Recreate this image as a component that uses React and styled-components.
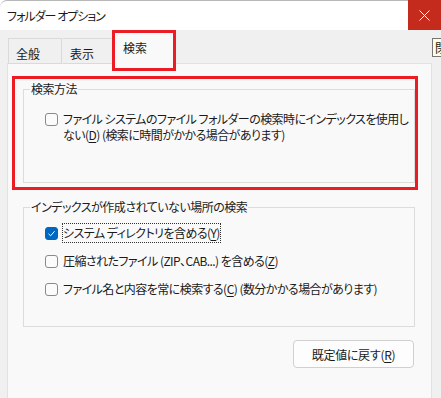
import React from 'react';
import styled, { createGlobalStyle } from 'styled-components';

const Global = createGlobalStyle`
  html, body { margin: 0; padding: 0; background: #f0f0f0; }
  body {
    font-family: "Noto Sans CJK JP", "Noto Sans", sans-serif;
    font-size: 12px;
    color: #1a1a1a;
  }
`;

const Window = styled.div`
  position: relative;
  width: 441px;
  height: 398px;
  overflow: hidden;
  background: #f0f0f0;
  display: flex;
  flex-direction: column;
  font-feature-settings: "palt";
`;

const TitleBar = styled.div`
  flex: none;
  height: 30px;
  display: flex;
  background: #fff;
`;

const Title = styled.div`
  flex: 1;
  display: flex;
  align-items: center;
  padding-left: 7px;
  box-sizing: border-box;
  border-top: 1px solid #b8b8b8;
  border-top-left-radius: 7px;
  font-size: 12px;
  letter-spacing: -1px;
`;

const CloseButton = styled.div`
  width: 33px;
  background: #c42b1c;
  display: flex;
  align-items: center;
  justify-content: center;
`;

const Body = styled.div`
  flex: 1;
  display: flex;
  flex-direction: column;
  padding: 0 9px 0 7px;
`;

const TabRow = styled.div`
  flex: none;
  height: 34px;
  display: flex;
  align-items: flex-end;
  padding-left: 1px;
  position: relative;
  z-index: 1;
`;

const Tab = styled.div`
  box-sizing: border-box;
  flex: none;
  width: ${p => (p.$active ? 62 : 54)}px;
  height: ${p => (p.$active ? 32 : 26)}px;
  margin: 0 ${p => (p.$active ? -2 : 0)}px 0 ${p => (p.$active ? -3 : 0)}px;
  padding: ${p => (p.$active ? '7px 0 0 9px' : '7px 0 0 7px')};
  background: ${p => (p.$active ? '#f9f9f9' : '#f0f0f0')};
  border: 1px solid #dadada;
  border-bottom: ${p => (p.$active ? 'none' : '1px solid #dadada')};
  border-left-color: ${p => (p.$first || p.$active ? '#dadada' : 'transparent')};
  font-size: 12px;
  line-height: 16px;
`;

const Panel = styled.div`
  flex: 1;
  margin-top: -1px;
  background: #f9f9f9;
  border: 1px solid #e2e2e2;
  border-bottom: none;
  padding: 17px 16px 0 15px;
  display: flex;
  flex-direction: column;
`;

const Group = styled.fieldset`
  margin: ${p => (p.$first ? 0 : '16px 0 0 0')};
  padding: ${p => (p.$first ? '14px 0 38px 0' : '8px 0 27px 0')};
  border: 1px solid #dcdcdc;
  min-width: 0;
  display: flex;
  flex-direction: column;
  gap: 8px;
`;

const Legend = styled.legend`
  margin-left: 6px;
  padding: 0 1px;
  line-height: 16px;
  font-size: 12px;
  letter-spacing: -0.5px;
`;

const Row = styled.div`
  display: flex;
  align-items: ${p => (p.$top ? 'flex-start' : 'center')};
  padding-left: 21px;
`;

const Box = styled.span`
  flex: none;
  box-sizing: border-box;
  width: 13px;
  height: 13px;
  margin-top: ${p => (p.$top ? 2 : 0)}px;
  margin-right: 4px;
  border-radius: 3px;
  border: 1px solid ${p => (p.$checked ? '#0067c0' : '#8a8a8a')};
  background: ${p => (p.$checked ? '#0067c0' : '#fbfbfb')};
  display: flex;
  align-items: center;
  justify-content: center;
`;

const Label = styled.span`
  border: 1px dotted ${p => (p.$focus ? '#333' : 'transparent')};
  line-height: ${p => (p.$multi ? 16 : 18)}px;
  margin-top: ${p => (p.$multi ? -1 : 0)}px;
  white-space: nowrap;
  font-size: 12px;
  letter-spacing: -0.55px;
`;

const Key = styled.span`
  text-decoration: underline;
  text-underline-offset: 2px;
`;

const ButtonRow = styled.div`
  display: flex;
  justify-content: flex-end;
  margin-top: 13px;
  padding-right: 1px;
`;

const Button = styled.div`
  box-sizing: border-box;
  width: 121px;
  height: 28px;
  border: 1px solid #d0d0d0;
  border-radius: 4px;
  background: #fdfdfd;
  display: flex;
  align-items: center;
  justify-content: center;
  font-size: 12px;
  letter-spacing: -0.3px;
`;

const Tooltip = styled.div`
  position: absolute;
  left: 432px;
  top: 38px;
  height: 19px;
  box-sizing: border-box;
  padding: 0 2px;
  border: 1px solid #767676;
  background: #ffffe1;
  line-height: 17px;
  font-size: 12px;
  white-space: nowrap;
  z-index: 3;
`;

const Annotation = styled.div`
  position: absolute;
  box-sizing: border-box;
  border: 3px solid #ec1c24;
  z-index: 4;
  pointer-events: none;
`;

function Check({ checked, top }) {
  return (
    <Box $checked={checked} $top={top}>
      {checked && (
        <svg width="9" height="9" viewBox="0 0 9 9">
          <path d="M1.5 4.8 L3.6 6.8 L7.6 2.2" fill="none" stroke="#fff" strokeWidth="1" />
        </svg>
      )}
    </Box>
  );
}

export default function App() {
  return (
    <Window>
      <Global />
      <TitleBar>
        <Title>フォルダー オプション</Title>
        <CloseButton>
          <svg width="11" height="11" viewBox="0 0 11 11">
            <path d="M0.5 0.5 L10.5 10.5 M10.5 0.5 L0.5 10.5" stroke="#fff" strokeWidth="1" />
          </svg>
        </CloseButton>
      </TitleBar>
      <Body>
        <TabRow>
          <Tab $first>全般</Tab>
          <Tab>表示</Tab>
          <Tab $active>検索</Tab>
        </TabRow>
        <Panel>
          <Group $first>
            <Legend>検索方法</Legend>
            <Row $top>
              <Check top />
              <Label $multi>
                ファイル システムのファイル フォルダーの検索時にインデックスを使用し
                <br />
                ない(<Key>D</Key>) (検索に時間がかかる場合があります)
              </Label>
            </Row>
          </Group>
          <Group>
            <Legend>インデックスが作成されていない場所の検索</Legend>
            <Row>
              <Check checked />
              <Label $focus>システム ディレクトリを含める(<Key>Y</Key>)</Label>
            </Row>
            <Row>
              <Check />
              <Label>圧縮されたファイル (ZIP、CAB...) を含める(<Key>Z</Key>)</Label>
            </Row>
            <Row>
              <Check />
              <Label>ファイル名と内容を常に検索する(<Key>C</Key>) (数分かかる場合があります)</Label>
            </Row>
          </Group>
          <ButtonRow>
            <Button>既定値に戻す(<Key>R</Key>)</Button>
          </ButtonRow>
        </Panel>
      </Body>
      <Tooltip>閉じる</Tooltip>
      <Annotation style={{ left: 112, top: 30, width: 64, height: 41 }} />
      <Annotation style={{ left: 12, top: 76, width: 406, height: 114 }} />
    </Window>
  );
}
